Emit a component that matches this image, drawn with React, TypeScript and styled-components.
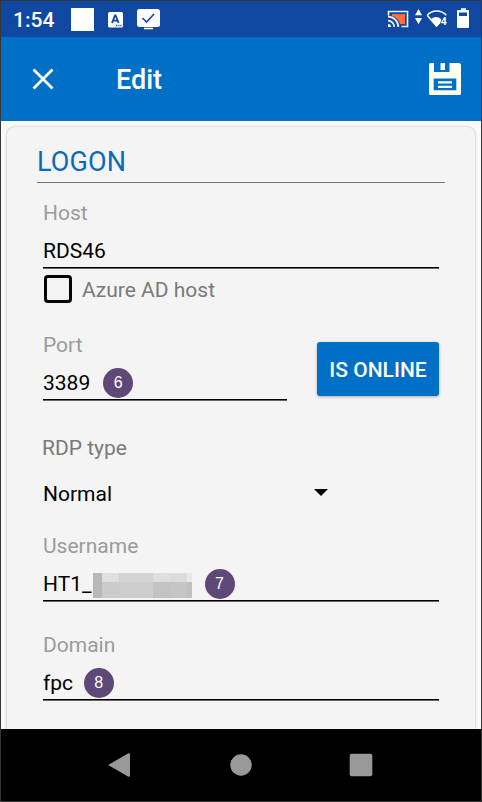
import React from "react";
import styled, { createGlobalStyle } from "styled-components";

const GlobalStyle = createGlobalStyle`
  *, *::before, *::after { box-sizing: border-box; }
  body { margin: 0; background: #333; font-family: Roboto, "Liberation Sans", sans-serif; }
  svg { display: block; flex: none; }
`;

const Device = styled.div`
  width: 482px;
  height: 802px;
  border: 1px solid #363636;
  display: flex;
  flex-direction: column;
  overflow: hidden;
  background: #fafafa;
`;

const StatusBar = styled.header`
  height: 36px;
  flex: none;
  background: #0f47a1;
  display: flex;
  align-items: flex-start;
  color: #fff;
`;

const Clock = styled.span`
  width: 58px;
  margin: 6px 0 0 12px;
  font-size: 21px;
  line-height: 26px;
  font-weight: 500;
`;

const AppBar = styled.div`
  height: 84px;
  flex: none;
  background: #006fc6;
  display: flex;
  align-items: center;
  padding: 0 20px 0 31px;
`;

const IconButton = styled.button`
  border: 0;
  padding: 0;
  background: transparent;
`;

const Title = styled.h1`
  flex: 1;
  margin: 2px 0 0 61px;
  color: #fffff8;
  font-size: 27px;
  line-height: 32px;
  font-weight: 500;
`;

const Content = styled.main`
  height: 608px;
  flex: none;
  padding: 6px 6px 0;
  overflow: hidden;
`;

const Card = styled.section`
  height: 640px;
  padding: 19px 30px 0;
  border-radius: 8px;
  background: #f4f4f4;
  box-shadow: 0 0 2px rgba(0, 0, 0, 0.28), 0 1px 4px rgba(0, 0, 0, 0.1);
`;

const SectionTitle = styled.h2`
  height: 37px;
  margin: 0;
  border-bottom: 1px solid #747474;
  color: #0b69bd;
  font-size: 27px;
  line-height: 32px;
  font-weight: 400;
  letter-spacing: 0.15px;
`;

const Form = styled.form`
  padding: 18px 6px 0;
  display: flex;
  flex-direction: column;
`;

const Field = styled.div<{ $width?: number }>`
  width: ${({ $width }) => ($width ? `${$width}px` : "100%")};
  display: flex;
  flex-direction: column;
  gap: 14px;
`;

const Label = styled.label`
  height: 24px;
  font-size: 21px;
  line-height: 24px;
  color: #9b9b9b;
`;

const SelectLabel = styled(Label)`
  margin-left: -1px;
  color: #7a7a7a;
`;

const Entry = styled.div<{ $badgeGap?: number }>`
  height: 30px;
  display: flex;
  align-items: flex-start;
  gap: ${({ $badgeGap }) => $badgeGap ?? 0}px;
  border-bottom: 1px solid #666;
  box-shadow: inset 0 -1px #000;
`;

const Value = styled.span`
  font-size: 21px;
  line-height: 24px;
  color: #000;
  white-space: nowrap;
`;

const Badge = styled.span`
  width: 30px;
  height: 30px;
  flex: none;
  margin-top: -3px;
  display: flex;
  align-items: center;
  justify-content: center;
  border-radius: 50%;
  background: #5e4878;
  color: #fff;
  font: 16px/28px "Liberation Sans", Arial, sans-serif;
`;

const CheckRow = styled.div`
  height: 28px;
  margin: 6px 0 30px 1px;
  display: flex;
  align-items: flex-start;
  gap: 10px;
`;

const CheckBox = styled.span`
  width: 28px;
  height: 28px;
  border: 3px solid #050505;
  border-radius: 4px;
`;

const CheckLabel = styled.span`
  padding-top: 3px;
  font-size: 21px;
  line-height: 24px;
  color: #7a7a7a;
`;

const PortRow = styled.div`
  height: 103px;
  display: flex;
  justify-content: space-between;
  align-items: flex-start;
`;

const OnlineButton = styled.button`
  width: 122px;
  height: 54px;
  margin-top: 9px;
  padding: 2px 0 0;
  border: 0;
  border-radius: 3px;
  background: #006fc6;
  box-shadow: 0 1px 3px rgba(0, 0, 0, 0.3);
  color: #fff;
  font: 500 21px/24px Roboto, sans-serif;
  white-space: nowrap;
`;

const Select = styled.div`
  width: 285px;
  height: 24px;
  margin: 22px 0 28px;
  display: flex;
  justify-content: space-between;
`;

const Mosaic = styled.span`
  width: 99px;
  height: 25px;
  flex: none;
  margin: 1px 12.5px 0 0;
  display: grid;
  grid-template: 9px 16px / 9px 17px 34px 17px 17px 5px;
`;

const Tile = styled.i<{ $tone: string }>`
  background: ${({ $tone }) => $tone};
`;

const Username = styled(Value)`
  width: 50px;
`;

const Spacer = styled.div`
  height: 31px;
`;

const NavBar = styled.nav`
  height: 72px;
  flex: none;
  background: #000;
  display: flex;
  justify-content: center;
  align-items: center;
  gap: 84px;
`;

const tones = [
  "#b8b8b8", "#dfdfdf", "#d4d4d4", "#dfdfdf", "#dcdcdc", "#e9e9e9",
  "#b8b8b8", "#cbcbcb", "#cdcdcd", "#c3c3c3", "#c5c5c5", "#c1c1c1",
];

const StatusIcons = () => (
  <svg width="410" height="36" viewBox="71 1 410 36" fill="#fff">
    <path d="M71 8h23v23H71z" />
    <rect x="108" y="12" width="15" height="15.5" rx="1.5" />
    <path d="M112 23l3-7.5h.6l3 7.5M113.2 20.6h4.2" stroke="#0f47a1" strokeWidth="1.8" fill="none" />
    <path d="M116 25.5h1.2m1 0h1.2m1 0h1.2" stroke="#0f47a1" strokeWidth="1.3" />
    <rect x="137" y="9" width="23" height="18" rx="2.5" />
    <path d="M142.5 18l4 4 7.5-8" fill="none" stroke="#0f47a1" strokeWidth="1.6" />
    <path d="M144 28.5h9" stroke="#fff" strokeWidth="1.6" />
    <path d="M392 14h13v10h-5c-.7-4-4-7-8-8z" fill="#ff6e40" />
    <path d="M388.500 15.500v-4h19v15h-6" fill="none" stroke="#f2f3fa" strokeWidth="1.600" />
    <path d="M388 16.700a10.300 10.300 0 0 1 10.300 10.300M388 20.700a6.300 6.300 0 0 1 6.300 6.300" fill="none" stroke="#f2f3fa" strokeWidth="1.700" />
    <path d="M388 24a3 3 0 0 1 3 3h-3z" />
    <path d="M415 15.300l3.500-6.300 3.500 6.300zM415 18l3.500 6.300L422 18z" />
    <path d="M427.200 15.200C432 9.500 441.500 9.500 446.300 15.200M427.200 15.200L436.500 26l4-4.500" fill="none" stroke="#fff" strokeWidth="1.500" />
    <path d="M431 19c3-2.800 7-2.800 10 0v3l-4.500 5z" />
    <text x="440.700" y="25" fontFamily="Roboto, sans-serif" fontWeight="700" fontSize="10.500" stroke="#0f47a1" strokeWidth="1.300" paintOrder="stroke">4</text>
    <path d="M461 8.300h5V10h2a1 1 0 0 1 1 1v16a1 1 0 0 1-1 1h-10a1 1 0 0 1-1-1V11a1 1 0 0 1 1-1h3z" />
    <path d="M459 12.500h8V16h-8z" fill="#0f47a1" />
  </svg>
);

const DropArrow = () => (
  <svg width="14" height="24" viewBox="0 0 14 24"><path d="M0 7h14l-7 7z" /></svg>
);

export default function App() {
  return (
    <>
      <GlobalStyle />
      <Device>
        <StatusBar>
          <Clock>1:54</Clock>
          <StatusIcons />
        </StatusBar>
        <AppBar>
          <IconButton aria-label="Close">
            <svg width="23" height="23" viewBox="0 0 23 23" fill="none" stroke="#fffff2" strokeWidth="2.8">
              <path d="M1.500 1.500l19 19M20.500 1.500l-19 19" />
            </svg>
          </IconButton>
          <Title>Edit</Title>
          <IconButton aria-label="Save">
            <svg width="32" height="32" viewBox="0 0 32 32" fill="#fffff0">
              <path fillRule="evenodd" d="M1.500 0H5v9h15.500V0H30.500L32 1.500v29a1.500 1.500 0 0 1-1.500 1.500h-29A1.500 1.500 0 0 1 0 30.500v-29A1.500 1.500 0 0 1 1.500 0zM4.700 15.500V27.200h22.600V15.500z" />
              <path d="M11.500 0h4.500v7h-4.500zM9 18.200h14v2.300H9zM9 22.700h14V25H9z" />
            </svg>
          </IconButton>
        </AppBar>
        <Content>
          <Card>
            <SectionTitle>LOGON</SectionTitle>
            <Form>
              <Field>
                <Label>Host</Label>
                <Entry><Value>RDS46</Value></Entry>
              </Field>
              <CheckRow>
                <CheckBox role="checkbox" aria-checked={false} />
                <CheckLabel>Azure AD host</CheckLabel>
              </CheckRow>
              <PortRow>
                <Field $width={244}>
                  <Label>Port</Label>
                  <Entry $badgeGap={13}><Value>3389</Value><Badge>6</Badge></Entry>
                </Field>
                <OnlineButton type="button">IS ONLINE</OnlineButton>
              </PortRow>
              <SelectLabel>RDP type</SelectLabel>
              <Select><Value>Normal</Value><DropArrow /></Select>
              <Field>
                <Label>Username</Label>
                <Entry>
                  <Username>HT1_</Username>
                  <Mosaic>{tones.map((tone, i) => <Tile key={i} $tone={tone} />)}</Mosaic>
                  <Badge>7</Badge>
                </Entry>
              </Field>
              <Spacer />
              <Field>
                <Label>Domain</Label>
                <Entry $badgeGap={10.5}><Value>fpc</Value><Badge>8</Badge></Entry>
              </Field>
            </Form>
          </Card>
        </Content>
        <NavBar>
          <svg width="36" height="36" viewBox="0 0 36 36" fill="#999"><path d="M6 17.500Q5.500 18 6 18.500L25 29.500Q27 30.500 27 28.500V7.500Q27 5.500 25 6.500z" /></svg>
          <svg width="36" height="36" viewBox="0 0 36 36" fill="#999"><circle cx="18" cy="18" r="10.700" /></svg>
          <svg width="36" height="36" viewBox="0 0 36 36" fill="#999"><rect x="6.700" y="6.700" width="22.600" height="22.600" rx="2" /></svg>
        </NavBar>
      </Device>
    </>
  );
}
